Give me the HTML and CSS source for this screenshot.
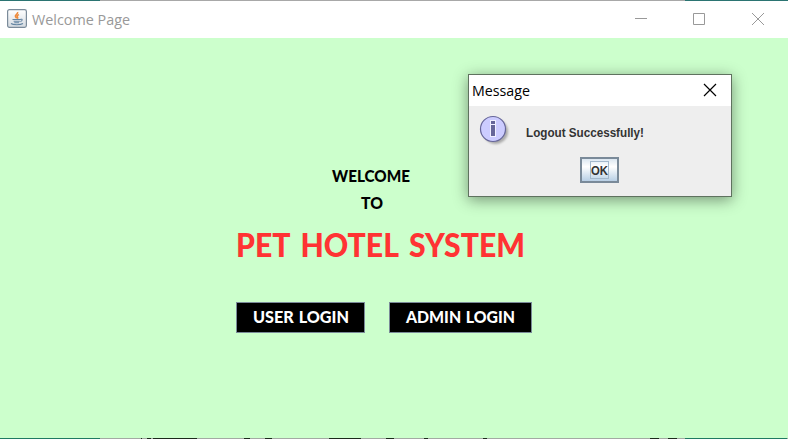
FILE: index.html
```html
<!DOCTYPE html>
<html lang="en">
<head>
<meta charset="utf-8">
<title>Welcome Page</title>
<link rel="stylesheet" href="styles.css">
</head>
<body>
<div class="window">
  <header class="titlebar">
    <svg class="java" width="20" height="19" viewBox="0 0 20 19">
      <defs><linearGradient id="tile" x2="0" y2="1"><stop stop-color="#fff"/><stop offset="1" stop-color="#d5dbe1"/></linearGradient></defs>
      <rect x=".6" y=".6" width="18.8" height="17.8" rx="1.8" fill="url(#tile)" stroke="#7b8b9a" stroke-width="1.2"/>
      <path d="M10.600 3c1 2-3 2.600-2.200 4.600.3.9 1.200 1.200 1.200 2M12 5.600c-2 .9-2.400 1.500-1.400 2.500.4.500.2 1-.3 1.600" fill="none" stroke="#ee8a3c" stroke-width="1.500"/>
      <path d="M5.500 10.500h8.300M6.600 12.300h6.200M7.300 13.700h4.800M13.600 10.300c2.200-.6 2 1.800-.3 2.200M4 14.500c2 1.600 9.500 1.600 12 0" fill="none" stroke="#6485a2" stroke-width="1.100"/>
    </svg>
    <svg class="caption" width="104" height="28"><text x="0" y="19" textLength="98" lengthAdjust="spacingAndGlyphs">Welcome Page</text></svg>
    <div class="controls">
      <svg width="12" height="12"><path d="M0 5.500h12"/></svg>
      <svg width="12" height="12"><path d="M.5.500h11v11H.5z"/></svg>
      <svg width="12" height="12"><path d="M0 0l12 12M12 0L0 12"/></svg>
    </div>
  </header>
  <main class="content">
    <svg class="line welcome" width="84" height="24"><text x="0" y="18" textLength="78" lengthAdjust="spacingAndGlyphs">WELCOME</text></svg>
    <svg class="line to" width="26" height="24"><text x="0" y="18" textLength="22" lengthAdjust="spacingAndGlyphs">TO</text></svg>
    <svg class="name" width="300" height="40"><text x="0" y="32" textLength="289" lengthAdjust="spacingAndGlyphs">PET HOTEL SYSTEM</text></svg>
    <div class="actions">
      <button class="login user"><svg width="96" height="24"><text x="0" y="18" textLength="96" lengthAdjust="spacingAndGlyphs">USER LOGIN</text></svg></button>
      <button class="login admin"><svg width="109" height="24"><text x="0" y="18" textLength="109" lengthAdjust="spacingAndGlyphs">ADMIN LOGIN</text></svg></button>
    </div>
  </main>
  <svg class="edge" width="788" height="1" shape-rendering="crispEdges">
    <path d="M0 .5h788" stroke="#a3aaa3"/>
    <path d="M0 .5h100M685 .5h102" stroke="#1f7a62"/>
    <path d="M141 .5h1m5 0h4m2 0h44m47 0h6m15 0h7m57 0h32m25 0h8m30 0h4m55 0h4m163 0h9m9 0h9" stroke="#1c2a1c"/>
  </svg>
  <section class="dialog">
    <header class="dialog-title">
      <svg class="caption" width="66" height="28"><text x="0" y="19" textLength="58" lengthAdjust="spacingAndGlyphs">Message</text></svg>
      <svg class="close" width="12" height="12"><path d="M0 0l12 12M12 0L0 12"/></svg>
    </header>
    <div class="dialog-body">
      <div class="message">
        <svg class="info" width="32" height="32">
          <defs><filter id="soft"><feGaussianBlur stdDeviation="1.300"/></filter></defs>
          <circle cx="15.500" cy="15.500" r="12.500" fill="#999" opacity=".8" filter="url(#soft)"/>
          <circle cx="13" cy="13" r="12.500" fill="#ccccff" stroke="#666699" stroke-width="1.200"/>
          <g shape-rendering="crispEdges">
            <path d="M10 4h6v17h-6z" fill="#f0f0ff"/>
            <path d="M11 5h4v3h-4zM11 9h4v11h-4z" fill="#666699"/>
          </g>
        </svg>
        <svg class="text" width="124" height="20"><text x="0" y="15" textLength="118" lengthAdjust="spacingAndGlyphs">Logout Successfully!</text></svg>
      </div>
      <button class="ok"><span class="focus"><svg width="17" height="16"><text x="0" y="13" textLength="17" lengthAdjust="spacingAndGlyphs">OK</text></svg></span></button>
    </div>
  </section>
</div>
</body>
</html>
```

FILE: styles.css
```css
* { box-sizing: border-box; }
body { margin: 0; }
svg { display: block; flex: none; overflow: visible; }
button { padding: 0; border-radius: 0; }
.window {
  position: relative;
  display: flex;
  flex-direction: column;
  width: 788px;
  height: 439px;
  overflow: hidden;
  background: #ccffcc;
}
.titlebar {
  display: flex;
  align-items: flex-start;
  height: 38px;
  padding: 9px 24px 0 7px;
  background: linear-gradient(90deg, #2b7472 100px, #a8a8a8 100px 685px, #2b7472 685px) 0 0 / 100% 1px no-repeat #fff;
}
.caption { font: 15px "Open Sans", sans-serif; }
.titlebar .caption { margin: -3px 0 0 5px; fill: #999; }
.controls { display: flex; gap: 47px; margin: 4px 0 0 auto; fill: none; stroke: #999; }
.controls svg:first-child { margin-right: -1px; }
.content { flex: 1; padding-top: 126px; font-family: Lato, sans-serif; font-weight: 900; }
.line { font-size: 16px; }
.welcome { margin-left: 332px; }
.to { margin: 3px 0 0 361px; }
.name { margin: 10px 0 0 236px; font-size: 33px; word-spacing: 4px; fill: #ff3333; }
.actions { display: flex; gap: 24px; margin: 37px 0 0 236px; }
.login {
  display: flex;
  justify-content: center;
  height: 31px;
  padding-top: 2px;
  border: 1px solid #7a8a99;
  background: #000;
  fill: #fff;
  font: 900 16px Lato, sans-serif;
  word-spacing: 1px;
}
.user { width: 129px; }
.admin { width: 143px; }
.dialog {
  position: absolute;
  left: 468px;
  top: 74px;
  width: 264px;
  height: 123px;
  border: 1px solid #5f725f;
  background: #eee;
  box-shadow: 0 3px 14px rgba(0, 0, 0, .42);
}
.dialog-title { display: flex; justify-content: space-between; height: 31px; padding: 2px 15px 0 3px; background: #fff; }
.close { margin-top: 7px; stroke: #000; stroke-width: 1.200; }
.dialog-body { padding: 10px 0 0 11px; }
.message { display: flex; height: 41px; }
.text { margin: 6px 0 0 14px; font: bold 12px "Liberation Sans", sans-serif; fill: #333; }
.ok {
  display: flex;
  width: 39px;
  height: 26px;
  margin-left: 100px;
  padding: 2px 0 0 8px;
  border: 2px solid #7a8a99;
  background: linear-gradient(#dce7f1, #fff 35%, #b8cfe5);
  font: bold 12px "Liberation Sans", sans-serif;
  fill: #333;
}
.focus { width: 19px; height: 18px; border: 1px solid #a3b8cc; }
```
